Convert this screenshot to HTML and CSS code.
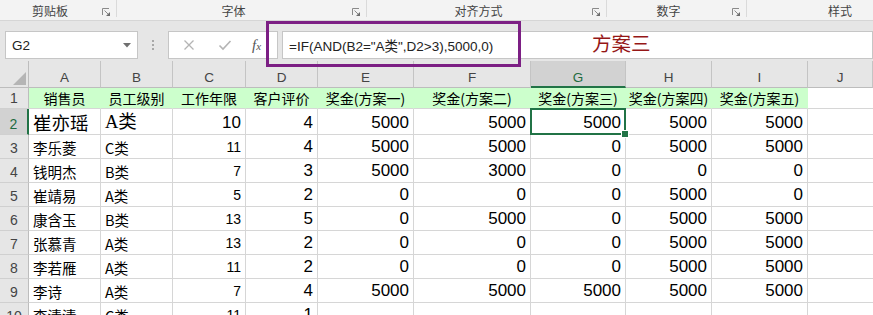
FILE: index.html
```html
<!DOCTYPE html>
<html lang="zh-CN">
<head>
<meta charset="utf-8">
<title>Excel</title>
<link rel="stylesheet" href="styles.css">
</head>
<body>
<div class="top">
  <div class="ribbon">
    <div class="grp g1"><span class="lbl">剪贴板</span><span class="launch"><svg width="8" height="8" viewBox="0 0 8 8"><path d="M0.5 7V0.5H7" fill="none" stroke="#8a8a8a"/><path d="M2.5 2.5L6.5 6.5" stroke="#8a8a8a"/><path d="M8 4V8H4Z" fill="#6e6e6e"/></svg></span></div>
    <div class="grp g2"><span class="lbl">字体</span><span class="launch"><svg width="8" height="8" viewBox="0 0 8 8"><path d="M0.5 7V0.5H7" fill="none" stroke="#8a8a8a"/><path d="M2.5 2.5L6.5 6.5" stroke="#8a8a8a"/><path d="M8 4V8H4Z" fill="#6e6e6e"/></svg></span></div>
    <div class="grp g3"><span class="lbl">对齐方式</span><span class="launch"><svg width="8" height="8" viewBox="0 0 8 8"><path d="M0.5 7V0.5H7" fill="none" stroke="#8a8a8a"/><path d="M2.5 2.5L6.5 6.5" stroke="#8a8a8a"/><path d="M8 4V8H4Z" fill="#6e6e6e"/></svg></span></div>
    <div class="grp g4"><span class="lbl">数字</span><span class="launch"><svg width="8" height="8" viewBox="0 0 8 8"><path d="M0.5 7V0.5H7" fill="none" stroke="#8a8a8a"/><path d="M2.5 2.5L6.5 6.5" stroke="#8a8a8a"/><path d="M8 4V8H4Z" fill="#6e6e6e"/></svg></span></div>
    <div class="grp g5"><span class="lbl5">样式</span></div>
  </div>
  <div class="fbar">
    <div class="namebox"><span>G2</span><svg class="caret" width="8" height="5" viewBox="0 0 8 5"><path d="M0 0H8L4 4.5Z" fill="#6f6f6f"/></svg></div>
    <div class="dots"><i></i><i></i><i></i></div>
    <div class="btns">
      <svg class="bx" width="12" height="12" viewBox="0 0 12 12"><path d="M1.5 1.5L10.5 10.5M10.5 1.5L1.5 10.5" stroke="#b4b4b4" stroke-width="1.3"/></svg>
      <svg class="bc" width="14" height="12" viewBox="0 0 14 12"><path d="M1.5 6.5L5 10L12.5 2" fill="none" stroke="#b4b4b4" stroke-width="1.6"/></svg>
      <span class="fx">f<span class="fxx">x</span></span>
    </div>
    <div class="finput">=IF(AND(B2="A类",D2&gt;3),5000,0)</div>
  </div>
  <div class="note">方案三</div>
  <div class="hl"></div>
</div>
<div class="sheet">
  <div class="corner"><svg width="13" height="13" viewBox="0 0 13 13"><path d="M13 0V13H0Z" fill="#b5b5b5"/></svg></div>
  <div class="ch">A</div><div class="ch">B</div><div class="ch">C</div><div class="ch">D</div><div class="ch">E</div><div class="ch">F</div><div class="ch sel">G</div><div class="ch">H</div><div class="ch">I</div><div class="ch">J</div>

  <div class="rh">1</div>
  <div class="c hd">销售员</div><div class="c hd">员工级别</div><div class="c hd">工作年限</div><div class="c hd">客户评价</div><div class="c hd">奖金(方案一)</div><div class="c hd">奖金(方案二)</div><div class="c hd">奖金(方案三)</div><div class="c hd">奖金(方案四)</div><div class="c hd">奖金(方案五)</div><div class="c last"></div>

  <div class="rh rsel">2</div>
  <div class="c r2 t name2">崔亦瑶</div><div class="c r2 t cls2">A类</div><div class="c r2 n">10</div><div class="c r2 n">4</div><div class="c r2 n">5000</div><div class="c r2 n">5000</div><div class="c r2 n active">5000</div><div class="c r2 n">5000</div><div class="c r2 n">5000</div><div class="c r2 last"></div>

  <div class="rh">3</div>
  <div class="c t">李乐菱</div><div class="c t">C类</div><div class="c n sm">11</div><div class="c n">4</div><div class="c n">5000</div><div class="c n">5000</div><div class="c n">0</div><div class="c n">5000</div><div class="c n">5000</div><div class="c last"></div>

  <div class="rh">4</div>
  <div class="c t">钱明杰</div><div class="c t">B类</div><div class="c n sm">7</div><div class="c n">3</div><div class="c n">5000</div><div class="c n">3000</div><div class="c n">0</div><div class="c n">0</div><div class="c n">0</div><div class="c last"></div>

  <div class="rh">5</div>
  <div class="c t">崔靖易</div><div class="c t">A类</div><div class="c n sm">5</div><div class="c n">2</div><div class="c n">0</div><div class="c n">0</div><div class="c n">0</div><div class="c n">5000</div><div class="c n">0</div><div class="c last"></div>

  <div class="rh">6</div>
  <div class="c t">康含玉</div><div class="c t">B类</div><div class="c n sm">13</div><div class="c n">5</div><div class="c n">0</div><div class="c n">5000</div><div class="c n">0</div><div class="c n">5000</div><div class="c n">5000</div><div class="c last"></div>

  <div class="rh">7</div>
  <div class="c t">张慕青</div><div class="c t">A类</div><div class="c n sm">13</div><div class="c n">2</div><div class="c n">0</div><div class="c n">0</div><div class="c n">0</div><div class="c n">5000</div><div class="c n">5000</div><div class="c last"></div>

  <div class="rh">8</div>
  <div class="c t">李若雁</div><div class="c t">A类</div><div class="c n sm">11</div><div class="c n">2</div><div class="c n">0</div><div class="c n">0</div><div class="c n">0</div><div class="c n">5000</div><div class="c n">5000</div><div class="c last"></div>

  <div class="rh">9</div>
  <div class="c t">李诗</div><div class="c t">A类</div><div class="c n sm">7</div><div class="c n">4</div><div class="c n">5000</div><div class="c n">5000</div><div class="c n">5000</div><div class="c n">5000</div><div class="c n">5000</div><div class="c last"></div>

  <div class="rh">10</div>
  <div class="c t">李清清</div><div class="c t">C类</div><div class="c n sm">11</div><div class="c n">1</div><div class="c n"></div><div class="c n"></div><div class="c n"></div><div class="c n"></div><div class="c n"></div><div class="c last"></div>
</div>
</body>
</html>
```
FILE: styles.css
```css
* { box-sizing: border-box; }
html, body { margin: 0; padding: 0; }
body {
  width: 873px;
  height: 315px;
  overflow: hidden;
  background: #e6e6e6;
  font-family: "Noto Sans CJK SC", sans-serif;
}

.top { position: relative; }

/* ribbon group labels */
.ribbon {
  display: flex;
  height: 21px;
  background: #f3f3f3;
  border-bottom: 1px solid #d6d6d6;
}
.grp {
  display: flex;
  height: 17px;
  border-right: 1px solid #dadada;
  align-items: center;
}
.g1 { width: 117px; }
.g2 { width: 250px; }
.g3 { width: 240px; }
.g4 { width: 140px; }
.g5 { border-right: none; flex: 1; }
.lbl {
  flex: 1;
  text-align: center;
  font-size: 12px;
  line-height: 17px;
  color: #444;
  padding-top: 3px;
}
.lbl5 {
  margin-left: 81px;
  font-size: 12px;
  line-height: 17px;
  color: #444;
  padding-top: 3px;
}
.launch {
  width: 16px;
  height: 17px;
  display: flex;
  align-items: flex-end;
  padding-bottom: 1px;
  padding-left: 2px;
}

/* formula bar */
.fbar {
  display: flex;
  height: 28px;
  margin-top: 10px;
}
.namebox {
  margin-left: 5px;
  width: 133px;
  height: 28px;
  background: #fff;
  border: 1px solid #c6c6c6;
  display: flex;
  align-items: center;
  justify-content: space-between;
  padding: 0 6px 0 6px;
  font-family: "Liberation Sans", sans-serif;
  font-size: 13.5px;
  color: #222;
}
.caret { margin-top: 1px; }
.dots {
  width: 30px;
  display: flex;
  flex-direction: column;
  align-items: center;
  justify-content: center;
  gap: 2px;
}
.dots i {
  display: block;
  width: 2px;
  height: 2px;
  background: #a8a8a8;
}
.btns {
  width: 110px;
  height: 28px;
  background: #fff;
  border: 1px solid #c6c6c6;
  display: flex;
  align-items: center;
  position: relative;
}
.bx { margin-left: 14px; }
.bc { margin-left: 23px; }
.fx {
  margin-left: 20px;
  font-family: "Liberation Serif", serif;
  font-style: italic;
  font-size: 15px;
  color: #555;
}
.fxx { font-size: 11px; }
.finput {
  flex: 1;
  height: 28px;
  background: #fff;
  border: 1px solid #c6c6c6;
  margin-left: 4px;
  padding-left: 6px;
  display: flex;
  align-items: center;
  font-family: "Liberation Sans", "Noto Sans CJK SC", sans-serif;
  font-size: 13.5px;
  color: #222;
}
.note {
  position: absolute;
  left: 592px;
  top: 30px;
  font-size: 19.5px;
  line-height: 26px;
  color: #951717;
}
.hl {
  position: absolute;
  left: 266px;
  top: 21px;
  width: 255px;
  height: 46px;
  border: 3px solid #7c1f84;
}

/* sheet */
.sheet {
  margin-top: 2px;
  display: grid;
  grid-template-columns: 29px 72px 72px 73px 72px 96px 117px 95px 86px 96px 1fr;
  grid-template-rows: 27px 21px 26px repeat(8, 24px);
  background: #fff;
}
.corner {
  background: #e6e6e6;
  border-right: 1px solid #bdbdbd;
  border-bottom: 1px solid #bdbdbd;
  display: flex;
  align-items: flex-end;
  justify-content: flex-end;
  padding: 0 2px 2px 0;
}
.ch {
  background: #e6e6e6;
  border-right: 1px solid #c4c4c4;
  border-bottom: 1px solid #bdbdbd;
  display: flex;
  align-items: flex-end;
  justify-content: center;
  padding-bottom: 3px;
  font-family: "Liberation Sans", sans-serif;
  font-size: 13.5px;
  line-height: 1;
  color: #444;
}
.ch.sel {
  background: #d2d2d2;
  border-bottom: 2px solid #217346;
  color: #1e6b40;
  padding-bottom: 2px;
}
.rh {
  background: #e6e6e6;
  border-right: 1px solid #bdbdbd;
  border-bottom: 1px solid #d0d0d0;
  display: flex;
  align-items: flex-end;
  justify-content: center;
  padding-bottom: 3px;
  font-family: "Liberation Sans", sans-serif;
  font-size: 14px;
  line-height: 1;
  color: #444;
}
.rh.rsel {
  background: #d2d2d2;
  border-right: 2px solid #217346;
  color: #1e6b40;
}
.c {
  border-right: 1px solid #d6d6d6;
  border-bottom: 1px solid #d6d6d6;
  display: flex;
  align-items: flex-end;
  padding: 0 4px 2px 4px;
  white-space: nowrap;
  line-height: 1;
  font-size: 14px;
  color: #000;
  position: relative;
}
.c.last { border-right: none; }
.hd {
  background: #ccffcc;
  border-right-color: #ccffcc;
  justify-content: center;
  font-size: 14px;
  padding-bottom: 3px;
}
.t {
  font-family: "Noto Sans CJK SC", sans-serif;
  font-size: 14.5px;
  padding-bottom: 3px;
}
.n {
  justify-content: flex-end;
  font-family: "Liberation Sans", sans-serif;
  font-size: 17px;
  padding-bottom: 3px;
}
.n.sm {
  font-size: 14px;
  padding-bottom: 4px;
}
.r2.name2 {
  font-size: 18.5px;
  padding-bottom: 3px;
}
.r2.cls2 {
  font-family: "Liberation Serif", "Noto Sans CJK SC", serif;
  font-size: 18.5px;
  padding-bottom: 3px;
}
.active::after {
  content: "";
  position: absolute;
  left: -1px;
  top: -1px;
  right: -1px;
  bottom: -1px;
  border: 2px solid #217346;
}
.active::before {
  content: "";
  position: absolute;
  right: -4px;
  bottom: -4px;
  width: 6px;
  height: 6px;
  background: #217346;
  border: 1px solid #fff;
  z-index: 2;
}
```
